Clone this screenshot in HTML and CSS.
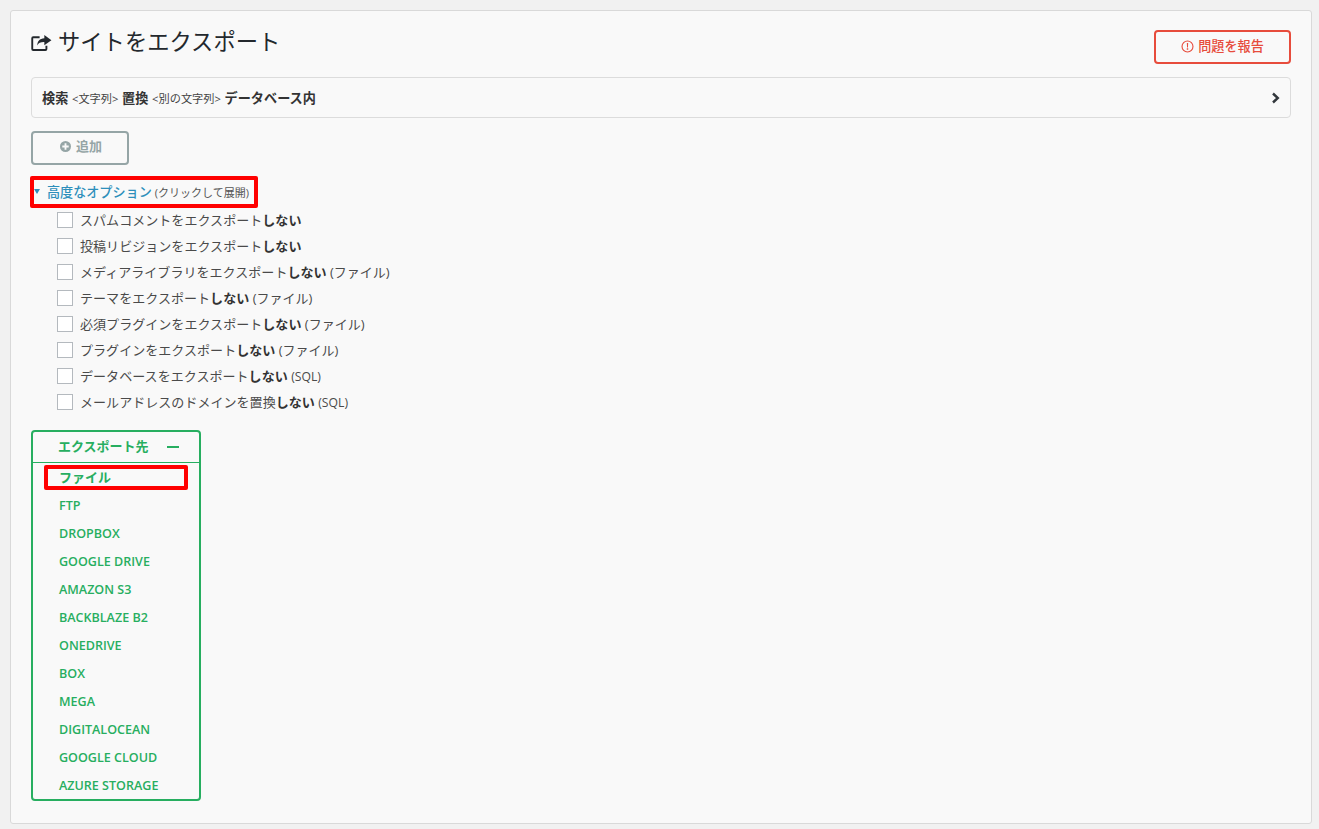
FILE: index.html
```html
<!DOCTYPE html>
<html lang="ja">
<head>
<meta charset="utf-8">
<title>サイトをエクスポート</title>
<link rel="stylesheet" href="styles.css">
</head>
<body>
<main class="panel">
  <header class="head">
    <h1 class="title">
      <svg class="title-icon" viewBox="0 0 22 18" width="21" height="17" aria-hidden="true">
        <path d="M9 3.500H2.200a1 1 0 0 0-1 1V16a1 1 0 0 0 1 1h13a1 1 0 0 0 1-1v-3.500" fill="none" stroke="#23282d" stroke-width="2"/>
        <path d="M14 1l7.500 5.500L14 12V8.600c-3.800-.1-6.200.8-7.400 3.600C6.400 7.500 9 4.700 14 4.400z" fill="#23282d"/>
      </svg>
      <span class="title-text">サイトをエクスポート</span>
    </h1>
    <a class="report">
      <svg class="report-icon" viewBox="0 0 14 14" width="13" height="13" aria-hidden="true">
        <circle cx="7" cy="7" r="5.900" fill="none" stroke="#e74c3c" stroke-width="1.200"/>
        <path d="M6.300 3.300h1.400l-.2 4.700h-1z M6.200 9h1.600v1.600H6.200z" fill="#e74c3c"/>
      </svg>
      <span class="lift">問題を報告</span>
    </a>
  </header>

  <div class="replace-bar">
    <div class="replace-text"><b>検索</b> <small>&lt;文字列&gt;</small> <b>置換</b> <small>&lt;別の文字列&gt;</small> <b>データベース内</b></div>
    <svg class="chevron" viewBox="0 0 10 12" width="10" height="12" aria-hidden="true">
      <path d="M2 1.500L6.800 6 2 10.500" fill="none" stroke="#32373c" stroke-width="2.400"/>
    </svg>
  </div>

  <a class="add">
    <svg class="add-icon" viewBox="0 0 12 12" width="11" height="11" aria-hidden="true">
      <circle cx="6" cy="6" r="6" fill="#95a5a6"/>
      <path d="M5 2.500h2V5h2.500v2H7v2.500H5V7H2.500V5H5z" fill="#f9f9f9"/>
    </svg>
    <span class="lift-more">追加</span>
  </a>

  <div class="advanced">
    <span class="tri"></span>
    <a class="advanced-link">高度なオプション</a>
    <small class="advanced-note">(クリックして展開)</small>
  </div>

  <ul class="options">
    <li class="option"><span class="check"></span><span class="lift-1">スパムコメントをエクスポート<b>しない</b></span></li>
    <li class="option"><span class="check"></span><span class="lift-1">投稿リビジョンをエクスポート<b>しない</b></span></li>
    <li class="option"><span class="check"></span><span class="lift-1">メディアライブラリをエクスポート<b>しない</b> <small>(ファイル)</small></span></li>
    <li class="option"><span class="check"></span><span class="lift-1">テーマをエクスポート<b>しない</b> <small>(ファイル)</small></span></li>
    <li class="option"><span class="check"></span><span class="lift-1">必須プラグインをエクスポート<b>しない</b> <small>(ファイル)</small></span></li>
    <li class="option"><span class="check"></span><span class="lift-1">プラグインをエクスポート<b>しない</b> <small>(ファイル)</small></span></li>
    <li class="option"><span class="check"></span><span class="lift-1">データベースをエクスポート<b>しない</b> <small class="sql">(SQL)</small></span></li>
    <li class="option"><span class="check"></span><span class="lift-1">メールアドレスのドメインを置換<b>しない</b> <small class="sql">(SQL)</small></span></li>
  </ul>

  <nav class="menu">
    <div class="menu-head"><span class="lift">エクスポート先</span><span class="minus"></span></div>
    <ul class="menu-list">
      <li class="menu-item first"><span class="lift-1">ファイル</span></li>
      <li class="menu-item">FTP</li>
      <li class="menu-item">DROPBOX</li>
      <li class="menu-item">GOOGLE DRIVE</li>
      <li class="menu-item">AMAZON S3</li>
      <li class="menu-item">BACKBLAZE B2</li>
      <li class="menu-item">ONEDRIVE</li>
      <li class="menu-item">BOX</li>
      <li class="menu-item">MEGA</li>
      <li class="menu-item">DIGITALOCEAN</li>
      <li class="menu-item">GOOGLE CLOUD</li>
      <li class="menu-item">AZURE STORAGE</li>
    </ul>
  </nav>
</main>
</body>
</html>
```
FILE: styles.css
```css
*, *::before { box-sizing: border-box; }
html, body { height: 100%; }
body {
  margin: 0;
  padding: 10px 7px 5px 10px;
  background: #f1f1f1;
  color: #444;
  font-family: "Open Sans", "Noto Sans CJK JP", sans-serif;
  font-size: 13px;
  overflow: hidden;
}
ul { list-style: none; margin: 0; padding: 0; }
.lift { padding-bottom: 4px; }
.lift-more { padding-bottom: 5px; }
.lift-1 { padding-bottom: 2px; }
.panel {
  height: 814px;
  background: #f9f9f9;
  border: 1px solid #d9d9d9;
  border-radius: 3px;
  padding: 19px 20px 0;
}
.head { display: flex; justify-content: space-between; height: 47px; }
.title {
  display: flex;
  align-items: center;
  gap: 6px;
  margin: 0;
  height: 26px;
  font-size: 22.300px;
  font-weight: 400;
  color: #23282d;
  line-height: 26px;
}
.title-text { padding-bottom: 2px; }
.title-icon { flex: none; margin-top: -1px; }
.report {
  display: flex;
  align-items: center;
  justify-content: center;
  gap: 4px;
  width: 137px;
  height: 34px;
  margin-bottom: 13px;
  border: 2px solid #e74c3c;
  border-radius: 4px;
  color: #e74c3c;
  font-size: 13.100px;
  font-weight: 500;
}
.report-icon { flex: none; margin-bottom: 1px; }
.replace-bar {
  display: flex;
  align-items: center;
  justify-content: space-between;
  height: 41px;
  padding: 0 9px 0 10px;
  border: 1px solid #dcdcdc;
  border-radius: 4px;
}
.replace-text { color: #333; font-size: 13.150px; padding-bottom: 1px; word-spacing: 0.300px; }
.replace-text b { font-weight: 700; }
.replace-text small { font-weight: 400; font-size: 11.200px; color: #444; }
.add {
  display: flex;
  align-items: center;
  justify-content: center;
  gap: 5px;
  width: 98px;
  height: 34px;
  margin-top: 13px;
  padding-left: 2px;
  border: 2px solid #95a5a6;
  border-radius: 4px;
  color: #95a5a6;
  font-weight: 700;
  font-size: 13px;
}
.add-icon { margin-bottom: 3px; }
.advanced {
  display: flex;
  align-items: center;
  width: 228px;
  height: 32px;
  margin: 11px 0 0 -1px;
  border: 4px solid #f00;
  border-radius: 2px;
  white-space: nowrap;
}
.tri {
  width: 0;
  height: 0;
  margin-right: 7px;
  margin-bottom: 2px;
  border-left: 3px solid transparent;
  border-right: 3px solid transparent;
  border-top: 5px solid #2d8fbb;
}
.advanced-link { color: #2d8fbb; font-weight: 500; font-size: 13.100px; padding-bottom: 1px; }
.advanced-note { margin-left: 3px; font-size: 11px; color: #555; }
.options { margin: -1px 0 0 26px; padding-bottom: 15px; font-size: 13.050px; color: #4a4a4a; }
.option {
  display: flex;
  align-items: center;
  gap: 7px;
  height: 26px;
  white-space: nowrap;
}
.option b { font-weight: 700; color: #333; }
.option small { font-size: 13px; }
.option .sql { font-size: 12.200px; }
.check {
  flex: none;
  width: 16px;
  height: 16px;
  border: 1px solid #b4b9be;
  background: #fff;
}
.menu {
  width: 170px;
  height: 371px;
  border: 2px solid #27ae60;
  border-radius: 4px;
  color: #27ae60;
  font-weight: 600;
}
.menu-head {
  display: flex;
  align-items: center;
  height: 31px;
  padding-left: 25px;
  border-bottom: 1px solid #27ae60;
  font-size: 13px;
}
.minus {
  width: 12px;
  height: 2px;
  margin-left: 18px;
  background: #27ae60;
}
.menu-item {
  display: flex;
  align-items: center;
  height: 28px;
  padding-left: 26px;
  font-size: 12.550px;
  white-space: nowrap;
}
.first {
  position: relative;
  font-weight: 700;
  font-size: 13px;
}
.first::before {
  content: "";
  position: absolute;
  left: 11px;
  top: 2px;
  width: 144px;
  height: 25px;
  border: 4px solid #f00;
  border-radius: 2px;
}
```
